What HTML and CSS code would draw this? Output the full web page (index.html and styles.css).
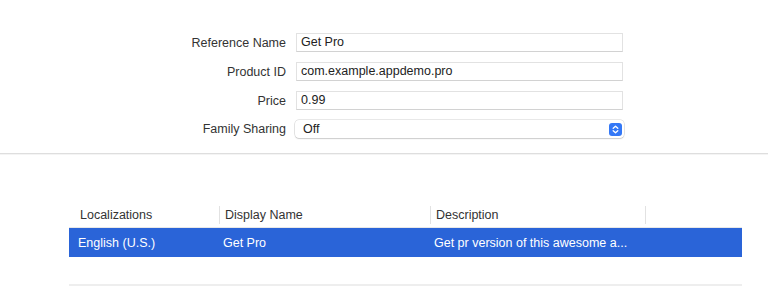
FILE: index.html
```html
<!DOCTYPE html>
<html lang="en">
<head>
    <meta charset="UTF-8">
    <title>In-App Purchase</title>
    <link rel="stylesheet" href="styles.css">
</head>
<body>
    <div class="form">
        <label class="label">Reference Name</label>
        <div class="field">Get Pro</div>

        <label class="label">Product ID</label>
        <div class="field">com.example.appdemo.pro</div>

        <label class="label">Price</label>
        <div class="field">0.99</div>

        <label class="label">Family Sharing</label>
        <div class="select">
            <span>Off</span>
            <svg class="stepper" width="13" height="13" viewBox="0 0 13 13">
                <rect x="0" y="0" width="13" height="13" rx="3" fill="#3478f6"/>
                <path d="M4.2 5.3 L6.5 3.2 L8.8 5.3" fill="none" stroke="#fff" stroke-width="1.3" stroke-linecap="round" stroke-linejoin="round"/>
                <path d="M4.2 7.7 L6.5 9.8 L8.8 7.7" fill="none" stroke="#fff" stroke-width="1.3" stroke-linecap="round" stroke-linejoin="round"/>
            </svg>
        </div>
    </div>

    <div class="separator"></div>

    <div class="table">
        <div class="table-head">
            <div class="cell col-loc">Localizations</div>
            <div class="cell col-name divided">Display Name</div>
            <div class="cell col-desc divided">Description</div>
            <div class="cell col-rest divided"></div>
        </div>
        <div class="table-row selected">
            <div class="cell col-loc">English (U.S.)</div>
            <div class="cell col-name">Get Pro</div>
            <div class="cell col-desc">Get pr version of this awesome a...</div>
            <div class="cell col-rest"></div>
        </div>
        <div class="table-empty"></div>
    </div>
</body>
</html>
```

FILE: styles.css
```css
body {
    margin: 0;
    padding: 0;
    background: #fff;
    font-family: "Liberation Sans", Arial, sans-serif;
    font-size: 12.5px;
    color: #262626;
}

.form {
    display: grid;
    grid-template-columns: 160px 327px;
    column-gap: 10px;
    row-gap: 10px;
    margin-left: 126px;
    padding-top: 33px;
    align-items: center;
}

.label {
    text-align: right;
    color: #333;
}

.field {
    height: 17px;
    line-height: 17px;
    padding-left: 4px;
    border: 1px solid #e2e2e2;
    border-bottom-color: #d2d2d2;
    background: #fff;
    color: #222;
}

.select {
    display: flex;
    align-items: center;
    justify-content: space-between;
    height: 18px;
    margin-left: -1px;
    margin-right: -1px;
    padding: 0 2px 0 8px;
    border-radius: 4px;
    background: #fff;
    box-shadow: 0 0 0 0.5px rgba(0, 0, 0, 0.18), 0 1px 1.5px rgba(0, 0, 0, 0.12);
    color: #222;
}

.stepper {
    display: block;
}

.separator {
    margin-top: 15px;
    height: 1px;
    background: #dedede;
    border-bottom: 1px solid #f4f4f4;
}

.table {
    margin: 48px 26px 0 69px;
}

.table-head {
    display: flex;
    height: 24px;
    align-items: center;
    border-bottom: 1px solid #e8e8e8;
    color: #333;
}

.table-head .cell {
    height: 18px;
    line-height: 18px;
}

.cell {
    box-sizing: border-box;
    white-space: nowrap;
    overflow: hidden;
}

.divided {
    border-left: 1px solid #e2e2e2;
}

.col-loc {
    width: 150px;
    padding-left: 11px;
}

.col-name {
    width: 211px;
    padding-left: 5px;
}

.col-desc {
    width: 215px;
    padding-left: 5px;
}

.col-rest {
    flex: 1;
}

.table-row {
    display: flex;
    height: 29px;
    align-items: center;
}

.table-row .col-loc {
    padding-left: 9px;
}

.table-row .col-name {
    padding-left: 4px;
}

.table-row .col-desc {
    padding-left: 4px;
}

.selected {
    background: #2a64d8;
    color: #fff;
}

.table-empty {
    height: 27px;
    border-bottom: 2px solid #eeeeee;
}
```
